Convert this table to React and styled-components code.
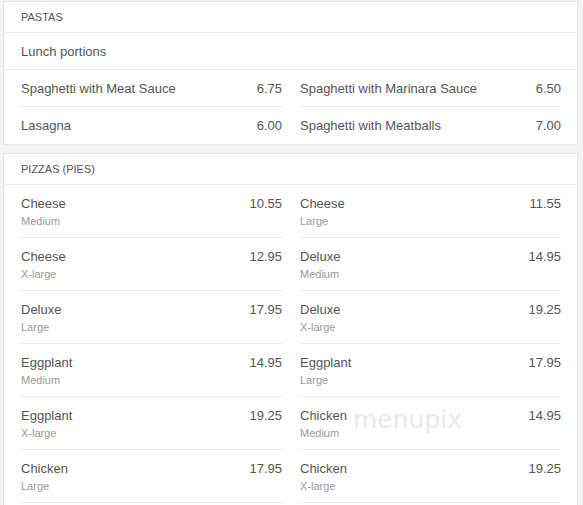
import styled, { createGlobalStyle } from "styled-components";

const pastas = [
  { name: "Spaghetti with Meat Sauce", price: "6.75" },
  { name: "Spaghetti with Marinara Sauce", price: "6.50" },
  { name: "Lasagna", price: "6.00" },
  { name: "Spaghetti with Meatballs", price: "7.00" },
];

const pizzas = [
  { name: "Cheese", size: "Medium", price: "10.55" },
  { name: "Cheese", size: "Large", price: "11.55" },
  { name: "Cheese", size: "X-large", price: "12.95" },
  { name: "Deluxe", size: "Medium", price: "14.95" },
  { name: "Deluxe", size: "Large", price: "17.95" },
  { name: "Deluxe", size: "X-large", price: "19.25" },
  { name: "Eggplant", size: "Medium", price: "14.95" },
  { name: "Eggplant", size: "Large", price: "17.95" },
  { name: "Eggplant", size: "X-large", price: "19.25" },
  { name: "Chicken", size: "Medium", price: "14.95" },
  { name: "Chicken", size: "Large", price: "17.95" },
  { name: "Chicken", size: "X-large", price: "19.25" },
];

const MenuItem = ({ name, size, price }) => (
  <StyledItem>
    <div>
      <ItemName>{name}</ItemName>
      {size && <ItemSize>{size}</ItemSize>}
    </div>
    <ItemPrice>{price}</ItemPrice>
  </StyledItem>
);

const App = () => (
  <>
    <GlobalStyle />
    <Page>
      <Section>
        <SectionTitle>Pastas</SectionTitle>
        <SubTitle>Lunch portions</SubTitle>
        <ItemGrid>
          {pastas.map((item, i) => (
            <MenuItem key={i} {...item} />
          ))}
        </ItemGrid>
      </Section>

      <Section $open>
        <SectionTitle>Pizzas (Pies)</SectionTitle>
        <ItemGrid $open>
          {pizzas.map((item, i) => (
            <MenuItem key={i} {...item} />
          ))}
        </ItemGrid>
        <Watermark>menupix</Watermark>
      </Section>
    </Page>
  </>
);

export default App;

const GlobalStyle = createGlobalStyle`
  body {
    margin: 0;
    background: #f3f3f4;
    font-family: "Liberation Sans", Arial, sans-serif;
  }
`;

const Page = styled.div`
  padding: 1px 5px 0 3px;
`;

const Section = styled.section`
  position: relative;
  background: #fff;
  border: 1px solid #e6e6e8;
  margin-bottom: 8px;
  padding-bottom: ${({ $open }) => ($open ? "20px" : "0")};
`;

const SectionTitle = styled.h2`
  margin: 0;
  height: 30px;
  line-height: 30px;
  padding: 0 17px;
  font-size: 11px;
  font-weight: normal;
  text-transform: uppercase;
  color: #555;
  border-bottom: 1px solid #ededee;
`;

const SubTitle = styled.div`
  padding: 10px 17px 9px;
  line-height: 17px;
  font-size: 13px;
  color: #555;
  border-bottom: 1px solid #ededee;
`;

const ItemGrid = styled.div`
  display: grid;
  grid-template-columns: 1fr 1fr;
  column-gap: 18px;
  padding: 0 16px 0 17px;

  & > div:nth-last-child(-n + 2) {
    border-bottom-color: ${({ $open }) => ($open ? "#ededee" : "transparent")};
  }
`;

const StyledItem = styled.div`
  display: flex;
  justify-content: space-between;
  align-items: flex-start;
  padding: 10px 0 9px;
  border-bottom: 1px solid #ededee;
`;

const ItemName = styled.div`
  font-size: 13px;
  line-height: 17px;
  color: #555;
`;

const ItemSize = styled.div`
  margin-top: 2px;
  margin-bottom: -1px;
  font-size: 11px;
  line-height: 15px;
  color: #999;
`;

const ItemPrice = styled.div`
  font-size: 13px;
  line-height: 17px;
  color: #555;
`;

const Watermark = styled.div`
  position: absolute;
  left: 349px;
  top: 251px;
  font-family: "DejaVu Sans", sans-serif;
  font-size: 25px;
  color: #e4e4e4;
  opacity: 0.8;
  pointer-events: none;
`;
